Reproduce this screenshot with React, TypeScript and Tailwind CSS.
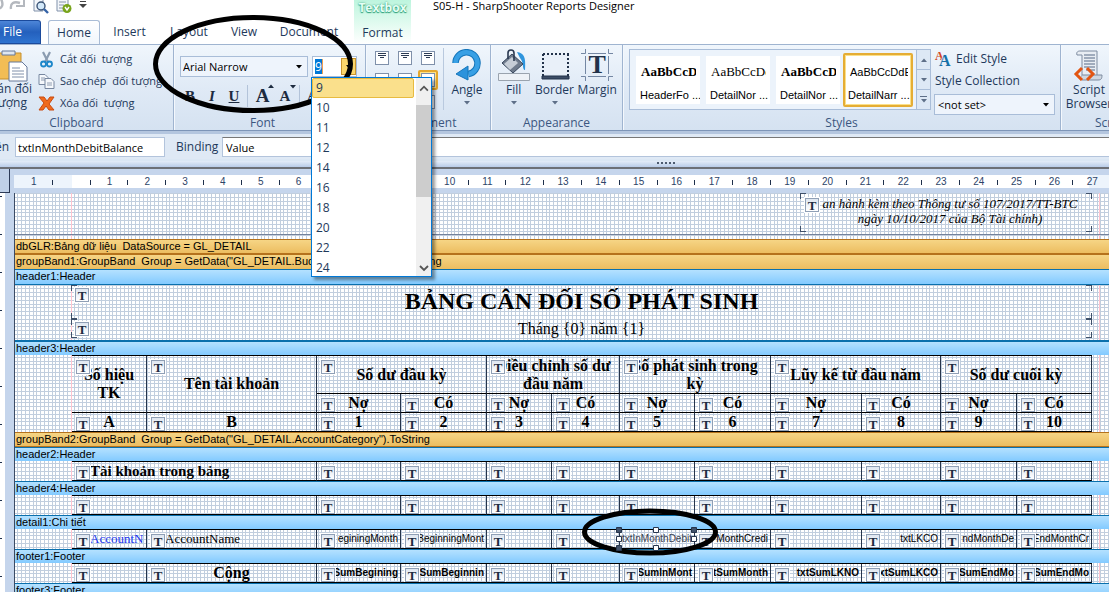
import type { ReactNode } from "react";

type Cell = { t?: string; span?: number; rows?: number; cls?: string };

const COLS = [75, 170, 84, 86, 65, 68, 75, 76, 91, 79, 76, 75];
const SIZES = ["9", "10", "11", "12", "14", "16", "18", "20", "22", "24"];
const RULER = Array.from({ length: 29 }, (_, i) => Math.abs(i - 1));

const heading = "text-center text-[16px] leading-[18px] font-bold";
const narrow = "text-right pr-[2px] text-[10px] leading-[14px] align-top pt-[2px] whitespace-nowrap font-[Liberation_Sans,sans-serif]";
const narrowBold = narrow + " font-bold";

function Badge({ className = "left-[4px] top-[4px]" }: { className?: string }) {
  return (
    <span className={`absolute z-[1] flex size-[14px] items-center justify-center border border-[#8f9fb5] bg-linear-to-b from-[#dfe7f1] to-white text-[13px] leading-none font-bold text-[#1d2b3f] not-italic shadow-[0_0_0_1px_white] font-[Liberation_Serif,serif] ${className}`}>
      T
    </span>
  );
}

function Corners() {
  return (
    <>
      <i className="absolute top-0 left-0 size-[6px] border-t border-l border-[#3f5069]" />
      <i className="absolute top-0 right-0 size-[6px] border-t border-r border-[#3f5069]" />
      <i className="absolute bottom-0 left-0 size-[6px] border-b border-l border-[#3f5069]" />
      <i className="absolute right-0 bottom-0 size-[6px] border-r border-b border-[#3f5069]" />
    </>
  );
}

function Arrow({ className = "" }: { className?: string }) {
  return (
    <svg viewBox="0 0 6 4" className={`h-[4px] w-[6px] ${className}`} fill="currentColor">
      <path d="M0 0h6L3 3.6z" />
    </svg>
  );
}

function Group({ label, className = "", children }: { label: string; className?: string; children: ReactNode }) {
  return (
    <section className={`flex shrink-0 flex-col border-r border-[#9fb4d0] shadow-[1px_0_0_#f4f8fd] ${className}`}>
      <div className="flex h-[71px] min-w-0">{children}</div>
      <h2 className="flex-1 text-center text-[12px] leading-[14px] whitespace-nowrap text-[#3b5680]">{label}</h2>
    </section>
  );
}

function Band({ text, kind, className = "" }: { text: string; kind: "gold" | "blue"; className?: string }) {
  const tone =
    kind === "gold"
      ? "border-[#b5721c] bg-linear-to-b from-[#f6d585] to-[#ecbd60]"
      : "border-[#0a70ad] bg-linear-to-b from-[#b4e1ff] to-[#82caff]";
  return (
    <h3 className={`relative overflow-hidden border-l pl-px text-[11px] leading-[13px] whitespace-pre text-black ${tone} ${className}`}>
      {text}
    </h3>
  );
}

function Rows({ rows, heights }: { rows: Cell[][]; heights: string[] }) {
  return (
    <table className="ml-[57px] w-[1021px] table-fixed border-separate border-spacing-0 border-t border-l border-black text-black font-[Liberation_Serif,serif]">
      <colgroup>
        {COLS.map((w, i) => (
          <col key={i} style={{ width: w }} />
        ))}
      </colgroup>
      <tbody>
        {rows.map((r, i) => (
          <tr key={i} className={heights[i]}>
            {r.map((c, j) => (
              <td
                key={j}
                colSpan={c.span}
                rowSpan={c.rows}
                className={`relative overflow-hidden border-r border-b border-r-[#26344a] border-b-black p-0 ${c.cls ?? heading}`}
              >
                <Badge />
                {c.t}
              </td>
            ))}
          </tr>
        ))}
      </tbody>
    </table>
  );
}

function AlignIcon({ on = false, y }: { on?: boolean; y: number }) {
  return (
    <button aria-label="Align" className={`flex size-[20px] items-center justify-center rounded-[2px] ${on ? "border-2 border-[#e5a82d] bg-[#ffe28a]" : ""}`}>
      <svg viewBox="0 0 14 14" className="size-[14px] shrink-0">
        <rect x=".5" y=".5" width="13" height="13" fill="#fff" stroke="#7f90aa" />
        <path d={`M3 ${y}.5h8M3 ${y + 2}.5h8M5 ${y + 4}.5h4`} stroke="#2b3a52" />
      </svg>
    </button>
  );
}

function StyleCard({ sample, name, cls, on = false }: { sample: string; name: string; cls: string; on?: boolean }) {
  return (
    <button className={`flex shrink-0 flex-col overflow-hidden bg-white text-left whitespace-nowrap text-black ${on ? "h-[54px] w-[70px] rounded-[2px] border-2 border-[#e5ad35] px-[3px] pt-[10px] ring-1 ring-[#fbe08a] ring-inset" : "h-[48px] w-[64px] px-[4px] pt-[9px]"}`}>
      <span className={`w-full overflow-hidden leading-[14px] ${cls}`}>{sample}</span>
      <span className="mt-[9px] text-[11px] leading-[14px] font-[Liberation_Sans,sans-serif]">{name}</span>
    </button>
  );
}

export default function App() {
  return (
    <div className="relative flex h-screen flex-col overflow-hidden bg-white text-[12px] text-[#1e395b] font-[Open_Sans,Noto_Sans,sans-serif]">
      <header className="flex h-[44px] shrink-0">
        <div className="flex w-[354px] flex-col">
          <div className="flex h-[20px] items-start gap-[7px]">
            <svg viewBox="0 0 26 12" className="h-[12px] w-[26px]" fill="none" stroke="#b4b8be" strokeWidth="2.4">
              <path d="M-2 9c4-1 6-4 3-10M11 9c-1-6 3-8 9-6" />
              <path d="M24-2v8h-8" strokeWidth="2" />
            </svg>
            <svg viewBox="0 0 16 14" className="h-[14px] w-[16px]">
              <path d="M1 -3h9v14H1z" fill="#f3f6fa" stroke="#8091aa" />
              <circle cx="8" cy="6" r="4" fill="#d3e9fa" stroke="#3c5476" strokeWidth="1.4" />
              <path d="M11 9l4 4" stroke="#3462a6" strokeWidth="2.4" />
            </svg>
            <svg viewBox="0 0 16 14" className="h-[14px] w-[16px]">
              <path d="M1 -3h11v14H1z" fill="#f3f6fa" stroke="#8091aa" />
              <path d="M3 2h7M3 5h5M3 8h4" stroke="#8794aa" />
              <circle cx="11" cy="8.500" r="4.500" fill="#78a41b" />
              <path d="M9 7l2 3 2-3" fill="none" stroke="#fff" strokeWidth="1.400" />
            </svg>
            <svg viewBox="0 0 8 8" className="mt-px h-[8px] w-[8px] text-[#444]" fill="currentColor">
              <path d="M1 0h6v1H1zM0 3h8L4 7z" />
            </svg>
          </div>
          <nav className="flex h-[24px] items-stretch">
            <button className="w-[41px] shrink-0 rounded-tr-[3px] border border-l-0 border-[#1b4a9c] bg-linear-to-b from-[#4d86d8] via-[#2460bd] to-[#2f74d0] pr-[18px] text-right text-white">File</button>
            <button className="ml-[7px] w-[52px] shrink-0 rounded-t-[3px] border border-b-0 border-[#a9bcd6] bg-linear-to-b from-white to-[#f0f6fc]">Home</button>
            <button className="w-[59px] shrink-0">Insert</button>
            <button className="w-[60px] shrink-0">Layout</button>
            <button className="w-[50px] shrink-0">View</button>
            <button className="w-[80px] shrink-0">Document</button>
          </nav>
        </div>
        <div className="flex w-[57px] flex-col bg-linear-to-b from-[#bdf5de] to-white text-center">
          <span className="h-[20px] text-[12px] leading-[16px] font-bold text-[#e6fff5] [text-shadow:0_0_2px_#2d9f78,0_1px_1px_#2d9f78]">Textbox</span>
          <button className="flex-1 pt-px">Format</button>
        </div>
        <h1 className="pl-[22px] text-[11px] leading-[12px] text-black">S05-H - SharpShooter Reports Designer</h1>
      </header>

      <main className="flex min-h-0 flex-1 flex-col">
        <div className="flex h-[87px] shrink-0 border-y border-t-[#9fb4d0] border-b-[#7d95b8] bg-linear-to-b from-[#f0f6fc] via-[#e0eaf6] to-[#d5e2f1]">
          <Group label="Clipboard" className="w-[174px] [&>h2]:pr-[20px]">
            <button className="flex w-[32px] shrink-0 flex-col items-end overflow-hidden pt-[5px] leading-[14px] whitespace-nowrap">
              <svg viewBox="0 0 28 32" className="h-[32px] w-[28px] self-start" fill="none">
                <path d="M-4 3h25v26H-4z" fill="#f2bd55" stroke="#c58f2e" />
                <path d="M2 1h13v4H2z" fill="#dfe7f0" stroke="#66789a" />
                <path d="M9 12h13l5 5v14H9z" fill="#fff" stroke="#66789a" />
                <path d="M12 18h8M12 21h12M12 24h12M12 27h12" stroke="#8090aa" />
              </svg>
              <span>Dán đối</span>
              <span className="pr-[5px]">tượng</span>
            </button>
            <div className="flex flex-col pt-[3px] pl-[6px] text-[11px]">
              <button className="flex h-[22px] items-center gap-[5px] whitespace-pre">
                <svg viewBox="0 0 17 17" className="size-[17px]" fill="none">
                  <path d="M5 1l5 10M12 1L7 11" stroke="#8a9bb0" strokeWidth="2.200" />
                  <circle cx="5.500" cy="13" r="2.500" stroke="#1c86c9" strokeWidth="1.800" />
                  <circle cx="11.500" cy="13" r="2.500" stroke="#1c86c9" strokeWidth="1.800" />
                </svg>
                Cắt đối  tượng
              </button>
              <button className="flex h-[22px] items-center gap-[5px] whitespace-pre">
                <svg viewBox="0 0 17 17" className="size-[17px]" fill="#f5f8fc" stroke="#7787a0">
                  <path d="M1 1.500h6l3 3v7H1z" />
                  <path d="M7 5.500h6l3 3v7H7z" />
                  <path d="M3 5h4M3 7h4M9 10h5M9 12h5" strokeWidth=".8" />
                </svg>
                Sao chép  đối tượng
              </button>
              <button className="flex h-[22px] items-center gap-[5px] whitespace-pre">
                <svg viewBox="0 0 17 17" className="size-[17px]">
                  <path d="M1 2h5l3 4 3-4h4l-5 7 5 6h-5l-3-4-3 4H1l5-7z" fill="#ef6a1c" stroke="#c94a10" />
                </svg>
                Xóa đối  tượng
              </button>
            </div>
          </Group>

          <Group label="Font" className="w-[192px] [&>h2]:pr-[14px]">
            <div className="flex flex-col gap-[8px] pt-[11px] pl-[6px]">
              <div className="flex h-[21px] gap-[4px]">
                <div className="relative w-[128px]">
                  <select aria-label="Font family" className="h-[21px] w-full appearance-none border border-[#a9bdd8] bg-[#eef4fc] pl-[2px] text-[11px] leading-[18px] text-black">
                    <option>Arial Narrow</option>
                  </select>
                  <Arrow className="pointer-events-none absolute top-[9px] right-[6px] text-black" />
                </div>
                <div className="relative flex h-[21px] w-[45px] items-center border border-[#a9bdd8] bg-white pl-[2px]">
                  <input aria-label="Font size" defaultValue="9" className="h-[15px] w-[8px] border-r border-[#f0a050] bg-[#0078d7] p-0 text-[12px] leading-[15px] text-white" />
                  <button aria-label="Open sizes" className="ml-auto flex h-[17px] w-[15px] items-center justify-center border border-[#c9952e] bg-[#fbd76c] text-black">
                    <Arrow />
                  </button>
                  <div className="absolute top-[20px] -left-[2px] z-30 flex h-[200px] w-[121px] border border-[#0078d7] bg-white shadow-[3px_3px_3px_rgba(0,0,0,0.4)]">
                    <ul className="flex-1 pr-[2px] leading-[20px]">
                      {SIZES.map((s, i) => (
                        <li key={s} className={`h-[20px] ${i === 0 ? "rounded-[2px] border border-[#e8bb40] bg-[#fae08c] pl-[3px] leading-[18px]" : "pl-[4px]"}`}>
                          {s}
                        </li>
                      ))}
                    </ul>
                    <div className="flex w-[15px] flex-col items-center bg-[#f0f0f0]">
                      <svg viewBox="0 0 10 28" className="h-[27px] w-[10px]" fill="none" stroke="#555" strokeWidth="1.800">
                        <path d="M1 13l4-4 4 4" />
                      </svg>
                      <div className="h-[92px] w-full bg-[#cdcdcd]" />
                      <svg viewBox="0 0 10 10" className="mt-auto mb-[3px] size-[10px]" fill="none" stroke="#555" strokeWidth="1.800">
                        <path d="M1 3l4 4 4-4" />
                      </svg>
                    </div>
                  </div>
                </div>
              </div>
              <div className="flex h-[22px] items-center font-bold text-[#1d2b3f] font-[Liberation_Serif,serif]">
                <button className="w-[20px] text-[15px]">B</button>
                <button className="w-[24px] text-[15px] italic">I</button>
                <button className="w-[20px] text-[15px] underline">U</button>
                <span className="mx-[3px] h-[22px] w-px bg-[#b3c3d9]" />
                <button className="relative w-[23px] text-[19px]">A<Arrow className="absolute top-[2px] right-0 rotate-180" /></button>
                <button className="relative w-[22px] text-[15px]">A<Arrow className="absolute top-0 right-0" /></button>
                <span className="mx-[3px] h-[22px] w-px bg-[#b3c3d9]" />
                <button className="w-[20px] text-[17px]">A</button>
              </div>
            </div>
          </Group>

          <Group label="Alignment" className="w-[125px]">
            <div className="grid h-[66px] grid-cols-3 gap-x-[3px] gap-y-[2px] pt-[3px] pl-[6px]">
              {[2, 2, 2, 4, 4, 4, 7, 7, 7].map((y, i) => (
                <AlignIcon key={i} y={y} on={i === 5} />
              ))}
            </div>
            <span className="mt-[3px] ml-[5px] h-[62px] w-px bg-[#b9c9de]" />
            <button className="flex flex-1 flex-col items-center pt-[4px]">
              <svg viewBox="0 0 32 32" className="size-[32px]" fill="none">
                <path d="M4.500 14a11 11 0 1 1 13 11" stroke="#1576bb" strokeWidth="6.500" />
                <path d="M4.500 14a11 11 0 1 1 13 11" stroke="#38a0e5" strokeWidth="4.500" />
                <path d="M5 25l12-8v14z" fill="#2b93dc" stroke="#1576bb" />
              </svg>
              <span className="leading-[18px]">Angle</span>
              <Arrow className="mt-[2px] text-[#5e6f88]" />
            </button>
          </Group>

          <Group label="Appearance" className="w-[132px]">
            <button className="flex w-[46px] flex-col items-center pt-[4px]">
              <svg viewBox="0 0 32 32" className="size-[32px]" fill="none">
                <path d="M19 3c7 1 9 5 8 18-3 0-1-8-5-12z" fill="#2f95dd" />
                <path d="M14 5l11 10-10 9L4 14z" fill="#6f7b8c" stroke="#39475c" />
                <path d="M14 8l6 6-8 7-6-6z" fill="#c6cdd6" />
                <path d="M10 10V4c0-4 6-4 6 0v8" stroke="#2b3a52" strokeWidth="1.600" />
                <path d="M.5 24.500h31v7H.5z" fill="#eef2f7" stroke="#9aa3ae" />
              </svg>
              <span className="leading-[18px]">Fill</span>
              <Arrow className="mt-[2px] text-[#5e6f88]" />
            </button>
            <button className="flex w-[36px] flex-col items-center pt-[4px]">
              <svg viewBox="0 0 32 32" className="size-[32px]" fill="none">
                <path d="M4 5h25v20H4z" fill="#e9f0f9" />
                <path d="M4 5h26M4 5v22M29 5v22" stroke="#22324a" strokeWidth="2" strokeDasharray="2 2" />
                <path d="M3 27h27v3H3z" fill="#3c4d66" stroke="#22324a" />
              </svg>
              <span className="leading-[18px]">Border</span>
              <Arrow className="mt-[2px] text-[#5e6f88]" />
            </button>
            <button className="flex w-[50px] flex-col items-center pt-[4px]">
              <span className="relative flex size-[32px] items-center justify-center text-[26px] leading-none font-bold text-[#22324a] font-[Liberation_Serif,serif]">
                <svg viewBox="0 0 32 32" className="absolute inset-0 size-[32px]" fill="none" stroke="#7487a3">
                  <path d="M4.500 0v4.500H0M27.500 0v4.500H32M4.500 32v-4.500H0M27.500 32v-4.500H32M7 4.500h18M7 27.500h18M4.500 7v18M27.500 7v18" />
                </svg>
                T
              </span>
              <span className="leading-[18px]">Margin</span>
            </button>
          </Group>

          <Group label="Styles" className="min-w-[438px] flex-1">
            <div className="mt-[4px] ml-[6px] flex h-[61px] shrink-0 items-center border border-[#a9bdd8] bg-[#ecf3fb]">
              <div className="flex items-center gap-[6px] pl-[6px]">
                <StyleCard sample="AaBbCcDd" name="HeaderFo ..." cls="pl-px text-[13px] font-bold font-[Liberation_Serif,serif]" />
                <StyleCard sample="AaBbCcDd" name="DetailNor ..." cls="pl-px text-[13px] font-[Liberation_Serif,serif]" />
                <StyleCard sample="AaBbCcDd" name="DetailNor ..." cls="pl-px text-[13px] font-bold font-[Liberation_Serif,serif]" />
              </div>
              <div className="mr-[3px] ml-[3px]">
                <StyleCard on sample="AaBbCcDdE" name="DetailNarr ..." cls="pl-[2px] text-[11px] font-[Liberation_Sans,sans-serif]" />
              </div>
              <div className="flex h-full w-[14px] flex-col divide-y divide-[#a9bdd8] border-l border-[#a9bdd8] bg-[#dde8f5] text-[#5e6f88]">
                <button aria-label="Previous styles" className="flex flex-1 items-center justify-center"><Arrow className="rotate-180" /></button>
                <button aria-label="Next styles" className="flex flex-1 items-center justify-center"><Arrow /></button>
                <button aria-label="All styles" className="flex flex-1 flex-col items-center justify-center gap-[2px]"><span className="h-px w-[7px] bg-[#5e6f88]" /><Arrow /></button>
              </div>
            </div>
            <div className="flex flex-col pt-[3px] pl-[3px]">
              <button className="flex h-[22px] items-center gap-[4px]">
                <svg viewBox="0 0 18 18" className="size-[18px] font-[Liberation_Serif,serif] font-bold">
                  <text x="1" y="10" fontSize="12" fill="#d2471b">A</text>
                  <text x="5" y="16" fontSize="16" fill="#1671a8" stroke="#e6eef8" strokeWidth="1" paintOrder="stroke">A</text>
                </svg>
                Edit Style
              </button>
              <label htmlFor="collection" className="h-[22px] pl-px leading-[22px]">Style Collection</label>
              <div className="relative mt-[2px] w-[121px]">
                <select id="collection" className="h-[21px] w-full appearance-none border border-[#a9bdd8] bg-[#eef4fc] pl-[3px] text-[11px] leading-[18px] text-black">
                  <option>&lt;not set&gt;</option>
                </select>
                <Arrow className="pointer-events-none absolute top-[9px] right-[6px] text-black" />
              </div>
            </div>
          </Group>

          <Group label="Scripting" className="w-[48px] overflow-hidden border-r-0 [&>h2]:pl-[34px] [&>h2]:text-left">
            <button className="flex w-[56px] shrink-0 flex-col items-center pt-[4px] leading-[14px]">
              <svg viewBox="0 0 32 32" className="mb-[2px] size-[32px]" fill="none">
                <path d="M7 2h17v26H9V6H4c-1-3 1-4 3-4z" fill="#e8edf3" stroke="#7d8ba0" />
                <path d="M9 26h20c0 4-1 5-4 5H9" fill="#cfd7e0" stroke="#7d8ba0" />
                <path d="M11 6h11M11 9h11M11 12h11M11 15h11M11 18h11M13 21h9" stroke="#8795aa" strokeWidth="1.300" />
                <path d="M9 19l-6 6 6 6M14 19l6 6-6 6" stroke="#e25512" strokeWidth="3" />
              </svg>
              <span>Script</span>
              <span>Browser</span>
            </button>
          </Group>
        </div>

        <div className="flex h-[28px] shrink-0 items-center border-t-[3px] border-[#b4c6df] bg-[#dfe9f5] pt-px">
          <label htmlFor="name" className="flex w-[15px] shrink-0 justify-end pr-[6px]">Tên</label>
          <input id="name" defaultValue="txtInMonthDebitBalance" className="h-[20px] w-[150px] border border-[#b3c4dc] bg-white px-[2px] text-[11px] text-black" />
          <label htmlFor="binding" className="w-[57px] pl-[11px]">Binding</label>
          <input id="binding" defaultValue="Value" className="h-[20px] min-w-0 flex-1 border border-r-0 border-[#b3c4dc] border-t-[#777] bg-white px-[3px] text-[11px] text-black" />
        </div>
        <div className="flex h-[10px] shrink-0 items-center justify-center gap-[2px] border-b-2 border-[#6d7077] bg-linear-to-b from-[#f3f8fd] to-[#b9cce8] pl-[222px] shadow-[inset_0_2px_0_#dbe7f4]">
          {[0, 1, 2, 3, 4].map((i) => (
            <span key={i} className="size-[2px] bg-[#4d5b70]" />
          ))}
        </div>

        <div className="flex h-[24px] shrink-0 bg-[#c5d5ec]">
          <div className="h-[24px] w-[10px] shrink-0 border-r border-b border-[#2b3a57] bg-[#bfd0e8]" />
          <div className="ml-[4px] flex h-[13px] min-w-0 flex-1 self-center overflow-hidden bg-[linear-gradient(to_right,#edf4fc_58px,white_58px,white_1075px,#edf4fc_1075px)]">
            <div className="flex w-[1097px] shrink-0 pl-px">
              {RULER.map((n, i) => (
                <span key={i} className="relative flex flex-1 items-center justify-center text-[10px] leading-[13px] text-[#2c4468] font-[Liberation_Sans,sans-serif]">
                  {n === 0 ? "" : n}
                  <i className="absolute top-[5px] right-0 h-[5px] w-px bg-[#1e2f4b]" />
                </span>
              ))}
            </div>
          </div>
        </div>

        <div className="flex min-h-0 flex-1 overflow-hidden">
          <div className="flex w-[14px] shrink-0 bg-[#c5d5ec]">
            <div className="w-[5px] bg-white bg-[linear-gradient(#1e2f4b_1px,transparent_1px)] bg-[size:2px_38px] bg-[position:0_3px] bg-repeat-y" />
          </div>
          <div className="relative min-w-0 flex-1 overflow-hidden border-l border-[#3b4a63] bg-white bg-[linear-gradient(to_right,#c1cede_1px,transparent_1px_4px,#c1cede_4px_5px,transparent_5px_8px,#c1cede_8px_9px,transparent_9px_12px,#c1cede_12px_13px,transparent_13px_16px,#c1cede_16px_17px,transparent_17px),linear-gradient(to_bottom,#c1cede_1px,transparent_1px_4px,#c1cede_4px_5px,transparent_5px_8px,#c1cede_8px_9px,transparent_9px_12px,#c1cede_12px_13px,transparent_13px_16px,#c1cede_16px_17px,transparent_17px)] bg-[size:19px_19px] bg-[position:2px_0] font-[Liberation_Sans,sans-serif]">
            <i className="absolute inset-y-0 left-[56px] w-px bg-[#ffc4cf]" />
            <i className="absolute inset-y-0 left-[1084px] w-px bg-[#ffc4cf]" />
            <div className="relative flex h-[42px] border-b border-[#74829b]">
              <p className="relative ml-[785px] h-[39px] w-[292px] pt-[3px] pl-[8px] text-center text-[13px] leading-[15px] text-black italic font-[Liberation_Serif,serif]">
                <Badge className="top-[5px] left-[5px]" />
                <Corners />
                an hành kèm theo Thông tư số 107/2017/TT-BTC
                <br />
                ngày 10/10/2017 của Bộ Tài chính)
              </p>
            </div>
            <div className="h-[4px]" />
            <div className="-ml-px">
              <Band kind="gold" text="dbGLR:Bảng dữ liệu  DataSource = GL_DETAIL" className="h-[15px] border-y" />
              <Band kind="gold" text={'groupBand1:GroupBand  Group = GetData("GL_DETAIL.BudgetSourceCode").ToString'} className="h-[15px] border-t" />
              <Band kind="blue" text="header1:Header" className="h-[16px] border-y" />
              <div className="relative h-[55px]">
                <div className="relative ml-[57px] flex h-[34px] w-[1021px] items-center justify-center pb-[2px] text-[24px] font-bold text-black font-[Liberation_Serif,serif]">
                  <Badge className="top-[3px] left-[4px]" />
                  <Corners />
                  BẢNG CÂN ĐỐI SỐ PHÁT SINH
                </div>
                <div className="relative ml-[57px] flex h-[19px] w-[1021px] items-center justify-center text-[16px] text-black font-[Liberation_Serif,serif]">
                  <Badge className="top-[3px] left-[4px]" />
                  <Corners />
                  Tháng {"{0}"} năm {"{1}"}
                </div>
              </div>
              <Band kind="blue" text="header3:Header" className="h-[15px] border-t-2" />
              <Rows
                heights={["h-[38px]", "h-[19px]", "h-[19px]"]}
                rows={[
                  [
                    { t: "Số hiệu TK", rows: 2, cls: heading + " px-[8px]" },
                    { t: "Tên tài khoản", rows: 2 },
                    { t: "Số dư đầu kỳ", span: 2 },
                    { t: "Điều chỉnh số dư đầu năm", span: 2 },
                    { t: "Số phát sinh trong kỳ", span: 2, cls: heading + " px-[6px]" },
                    { t: "Lũy kế từ đầu năm", span: 2 },
                    { t: "Số dư cuối kỳ", span: 2 },
                  ],
                  [0, 1, 2, 3, 4, 5, 6, 7, 8, 9].map((i) => ({ t: i % 2 ? "Có" : "Nợ" })),
                  ["A", "B", "1", "2", "3", "4", "5", "6", "7", "8", "9", "10"].map((t) => ({ t })),
                ]}
              />
              <Band kind="gold" text={'groupBand2:GroupBand  Group = GetData("GL_DETAIL.AccountCategory").ToString'} className="h-[15px] border-y" />
              <Band kind="blue" text="header2:Header" className="h-[14px] border-t" />
              <Rows
                heights={["h-[19px]"]}
                rows={[[{ t: "Tài khoản trong bảng", span: 2, cls: "pl-[18px] text-left text-[15px] leading-[18px] font-bold" }, ...Array.from({ length: 10 }, () => ({}))]]}
              />
              <Band kind="blue" text="header4:Header" className="h-[14px] border-t" />
              <Rows heights={["h-[19px]"]} rows={[[{ span: 2 }, ...Array.from({ length: 10 }, () => ({}))]]} />
              <Band kind="blue" text="detail1:Chi tiết" className="h-[14px] border-t" />
              <Rows
                heights={["h-[19px]"]}
                rows={[[
                  { t: "AccountN", cls: "pl-[18px] text-left text-[13px] leading-[18px] text-[#1b35ee]" },
                  { t: "AccountName", cls: "pl-[18px] text-left text-[13px] leading-[18px]" },
                  { t: "eginingMonth", cls: narrow },
                  { t: "BeginningMont", cls: narrow },
                  {},
                  {},
                  { t: "txtInMonthDebit", cls: narrow + " text-[#3b4250] [&>span]:hidden" },
                  { t: "MonthCredi", cls: narrow },
                  {},
                  { t: "txtLKCO", cls: narrow },
                  { t: "ndMonthDe", cls: narrow },
                  { t: "EndMonthCr", cls: narrow },
                ]]}
              />
              <Band kind="blue" text="footer1:Footer" className="h-[14px] border-t" />
              <Rows
                heights={["h-[19px]"]}
                rows={[[
                  {},
                  { t: "Cộng" },
                  { t: "SumBegining", cls: narrowBold },
                  { t: "SumBeginnin", cls: narrowBold },
                  {},
                  {},
                  { t: "SumInMont", cls: narrowBold },
                  { t: "tSumMonth", cls: narrowBold },
                  { t: "txtSumLKNO", cls: narrowBold },
                  { t: "xtSumLKCO", cls: narrowBold },
                  { t: "SumEndMo", cls: narrowBold },
                  { t: "SumEndMo", cls: narrowBold },
                ]]}
              />
              <Band kind="blue" text="footer3:Footer" className="h-[15px] border-t" />
            </div>
          </div>
        </div>
      </main>

      <svg viewBox="0 0 200 100" className="pointer-events-none absolute top-[14px] left-[153px] z-20 h-[100px] w-[200px]" fill="none" stroke="#000" strokeWidth="5">
        <ellipse cx="100" cy="50" rx="97.500" ry="46.500" />
      </svg>
      <svg viewBox="0 0 136 48" className="pointer-events-none absolute top-[508px] left-[582px] z-20 h-[48px] w-[136px]" fill="none">
        <ellipse cx="68" cy="24" rx="65.500" ry="21" stroke="#000" strokeWidth="5" />
        <g fill="#fff" stroke="#26354d">
          <path d="M71.500 19.500h5v5h-5zM71.500 37.500h5v5h-5zM34.500 28.500h5v5h-5zM109.500 28.500h5v5h-5z" />
          <path d="M34.500 19.500h5v5h-5zM34.500 37.500h5v5h-5zM109.500 19.500h5v5h-5z" fill="#3f5069" />
        </g>
      </svg>
    </div>
  );
}
